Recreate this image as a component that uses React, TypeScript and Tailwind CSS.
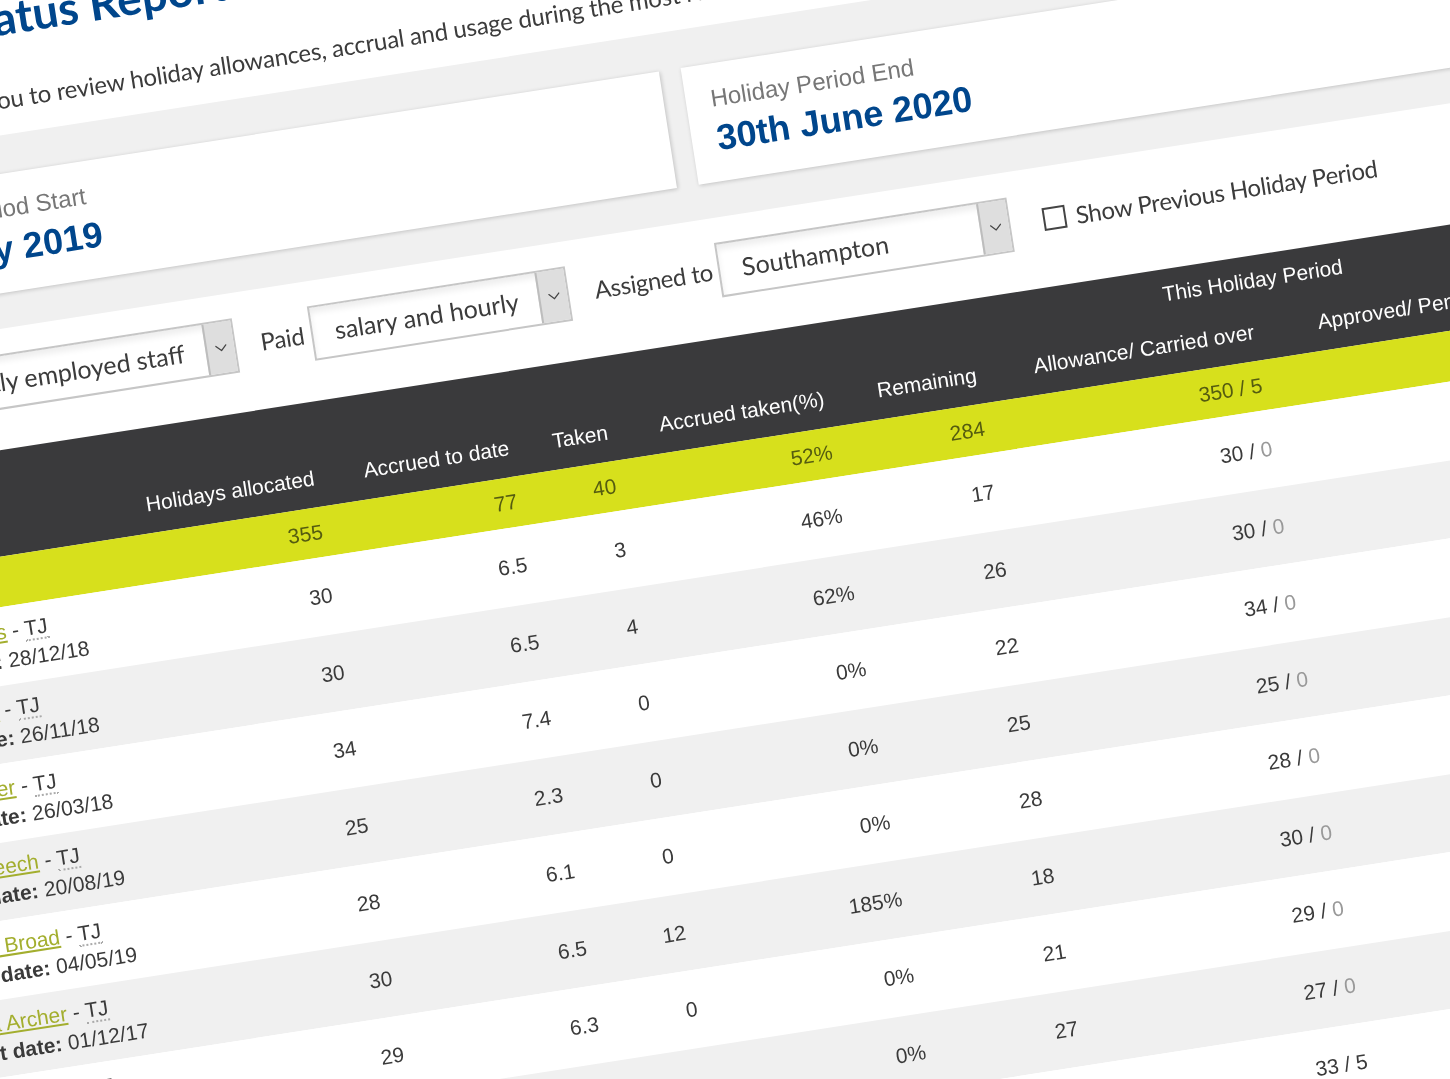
import { ChevronDown } from "lucide-react";

interface Staff {
  name: string;
  date: string;
  allocated: string;
  accrued: string;
  taken: string;
  pct: string;
  remaining: string;
  allowance: string;
  carried: string;
}

const STAFF: Staff[] = [
  { name: "Amy Davies", date: "28/12/18", allocated: "30", accrued: "6.5", taken: "3", pct: "46%", remaining: "17", allowance: "30", carried: "0" },
  { name: "Ben Clark", date: "26/11/18", allocated: "30", accrued: "6.5", taken: "4", pct: "62%", remaining: "26", allowance: "30", carried: "0" },
  { name: "Ian Parker", date: "26/03/18", allocated: "34", accrued: "7.4", taken: "0", pct: "0%", remaining: "22", allowance: "34", carried: "0" },
  { name: "Jack Beech", date: "20/08/19", allocated: "25", accrued: "2.3", taken: "0", pct: "0%", remaining: "25", allowance: "25", carried: "0" },
  { name: "Stuart Broad", date: "04/05/19", allocated: "28", accrued: "6.1", taken: "0", pct: "0%", remaining: "28", allowance: "28", carried: "0" },
  { name: "Jofra Archer", date: "01/12/17", allocated: "30", accrued: "6.5", taken: "12", pct: "185%", remaining: "18", allowance: "30", carried: "0" },
  { name: "Mark Wood", date: "14/02/18", allocated: "29", accrued: "6.3", taken: "0", pct: "0%", remaining: "21", allowance: "29", carried: "0" },
  { name: "Sam Curran", date: "09/07/18", allocated: "27", accrued: "5.9", taken: "0", pct: "0%", remaining: "27", allowance: "27", carried: "0" },
  { name: "Joe Denly", date: "11/01/17", allocated: "33", accrued: "7.2", taken: "0", pct: "0%", remaining: "38", allowance: "33", carried: "5" },
];

const COLS = "grid grid-cols-[278px_196px_197px_100px_219px_154px_281px_243px_1fr]";

function Select({ value, width }: { value: string; width: string }) {
  return (
    <div className={`${width} h-[55px] flex border-2 border-[#c6c6c6] bg-white shadow-[inset_0_5px_6px_rgba(0,0,0,0.07)]`}>
      <div className="flex-1 flex items-center pl-[22px] overflow-hidden whitespace-nowrap text-[25px] tracking-normal">{value}</div>
      <div className="w-[29px] bg-[#dedede] border-l-2 border-[#bdbdbd] flex items-center justify-center">
        <ChevronDown className="w-[20px] h-[20px] text-[#444]" strokeWidth={1.5} />
      </div>
    </div>
  );
}

function StaffRow({ s, shaded, last }: { s: Staff; shaded: boolean; last: boolean }) {
  return (
    <div className={`${COLS} h-[77.5px] items-center text-right text-[#3a3a3a] ${shaded ? "bg-[#f0f0f0]" : "bg-white"}`}>
      <div className="pl-[34px] text-left leading-[29px] whitespace-nowrap">
        <div>
          <a className="text-[#a3ae2e] underline">{s.name}</a> -{" "}
          <abbr className="no-underline border-b-2 border-dotted border-[#aaa]">TJ</abbr>
        </div>
        <div>
          <b>Start date:</b> {s.date}
        </div>
      </div>
      <div>{s.allocated}</div>
      <div>{s.accrued}</div>
      <div>{s.taken}</div>
      <div>{s.pct}</div>
      <div>{s.remaining}</div>
      <div>
        {s.allowance} / <span className={last ? "" : "text-[#999]"}>{s.carried}</span>
      </div>
      <div>0 / 0</div>
      <div />
    </div>
  );
}

export default function App() {
  return (
    <div className="w-[1450px] h-[1079px] overflow-hidden bg-white blur-[0.6px]">
      <div className="ml-[-237px] mt-[-30px] w-[1900px] origin-[237px_30px] rotate-[-8.85deg] bg-white text-[24px] tracking-[-0.35px] text-[#3c3c3c] font-['Lato',sans-serif]">
        <div className="pl-[28px] pt-[23px]">
          <h1 className="ml-[-10px] text-[46px] leading-[50px] font-bold tracking-normal text-[#00468c] whitespace-nowrap">Holiday Status Report</h1>
          <p className="ml-[-10px] mt-[41px] leading-[30px] tracking-[-0.2px] whitespace-nowrap">
            This report allows you to review holiday allowances, accrual and usage during the most recent holiday period.
          </p>
        </div>

        <div className="mt-[20px] bg-[#f0f0f0] pl-[54px] pt-[38px] pb-[35px] flex gap-[22px] tracking-normal font-['Liberation_Sans',sans-serif]">
          <div className="w-[823px] h-[118px] bg-white shadow-[1px_1px_4px_rgba(0,0,0,0.2)] pl-[24px] pt-[21px]">
            <div className="text-[24px] leading-[28px] text-[#777]">Holiday Period Start</div>
            <div className="mt-[4px] text-[36px] leading-[44px] font-bold text-[#00468c]">1st July 2019</div>
          </div>
          <div className="w-[823px] h-[118px] bg-white shadow-[1px_1px_4px_rgba(0,0,0,0.2)] pl-[25px] pt-[21px]">
            <div className="text-[24px] leading-[28px] text-[#777]">Holiday Period End</div>
            <div className="mt-[4px] text-[36px] leading-[44px] font-bold text-[#00468c]">30th June 2020</div>
          </div>
        </div>

        <div className="mt-[25px] flex items-center pl-[25px] whitespace-nowrap">
          <div className="w-[45px]">Show</div>
          <Select value="Currently employed staff" width="w-[347px]" />
          <div className="ml-[25px] w-[44px]">Paid</div>
          <div className="ml-[7px]">
            <Select value="salary and hourly" width="w-[261px]" />
          </div>
          <div className="ml-[26px] w-[118px]">Assigned to</div>
          <div className="ml-[7px]">
            <Select value="Southampton" width="w-[296px]" />
          </div>
          <div className="ml-[33px] w-[23px] h-[23px] border-2 border-[#444] bg-white" />
          <div className="ml-[10px]">Show Previous Holiday Period</div>
        </div>

        <div className="mt-[40px] font-['Liberation_Sans',sans-serif] tracking-normal text-[21px]">
          <div className={`${COLS} h-[105px] grid-rows-[48px_57px] bg-[#3a3a3c] text-right text-white whitespace-nowrap`}>
            <div className="col-start-7 col-span-2 pl-[51px] text-center self-center pt-[2px]">This Holiday Period</div>
            <div className="row-start-2 col-start-2 pt-[12px]">Holidays allocated</div>
            <div className="row-start-2 col-start-3 pt-[12px]">Accrued to date</div>
            <div className="row-start-2 col-start-4 pt-[12px]">Taken</div>
            <div className="row-start-2 col-start-5 pt-[12px]">Accrued taken(%)</div>
            <div className="row-start-2 col-start-6 pt-[12px]">Remaining</div>
            <div className="row-start-2 col-start-7 pt-[12px]">Allowance/ Carried over</div>
            <div className="row-start-2 col-start-8 pt-[12px]">Approved/ Pending</div>
          </div>
          <div className={`${COLS} h-[50px] items-center bg-[#d7e01c] text-right text-[#555c10]`}>
            <div />
            <div>355</div>
            <div>77</div>
            <div>40</div>
            <div>52%</div>
            <div>284</div>
            <div>350 / 5</div>
            <div>30 / 0</div>
            <div />
          </div>
          {STAFF.map((s, i) => (
            <StaffRow key={s.name} s={s} shaded={i % 2 === 1} last={i === STAFF.length - 1} />
          ))}
        </div>
      </div>
    </div>
  );
}
